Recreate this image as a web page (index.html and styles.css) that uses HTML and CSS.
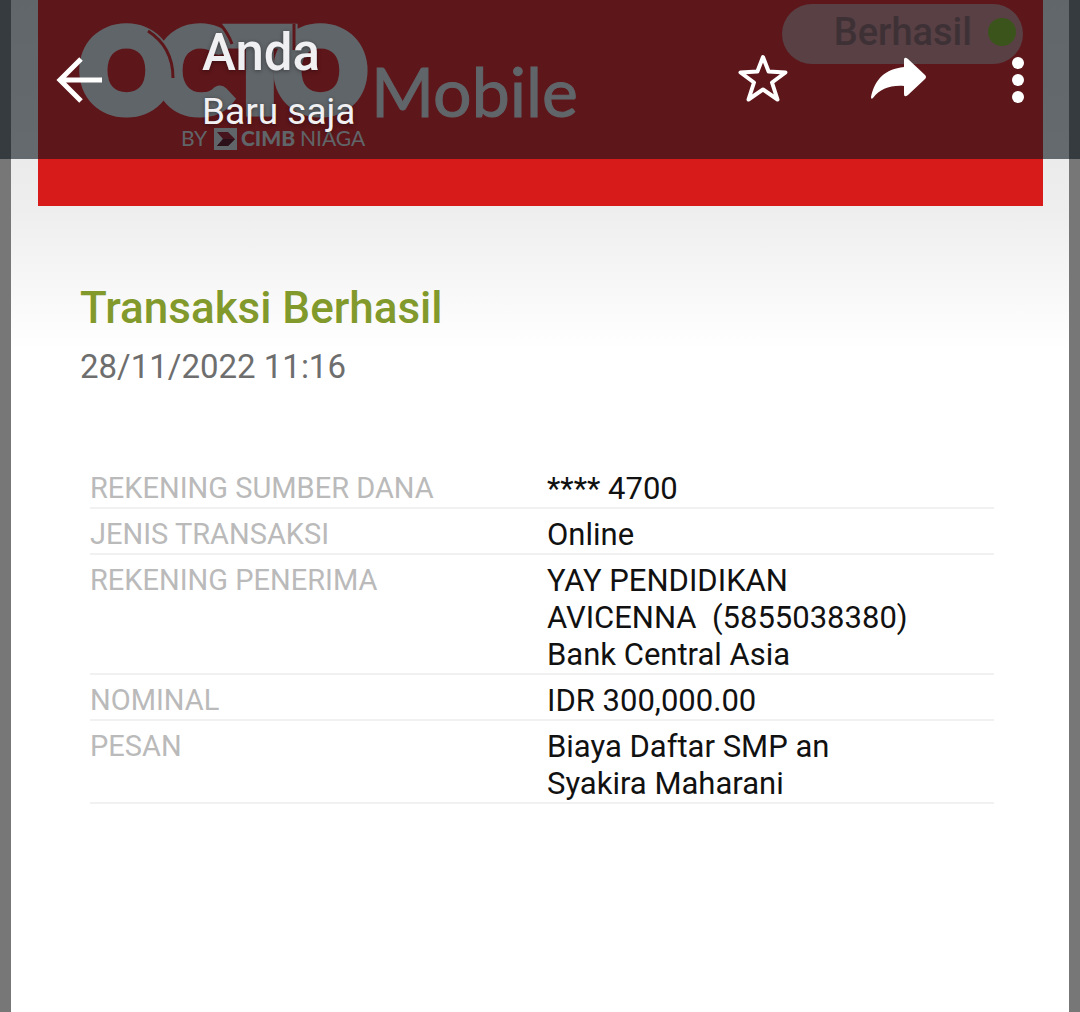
FILE: index.html
```html
<!DOCTYPE html>
<html lang="id">
<head>
<meta charset="utf-8">
<meta name="viewport" content="width=device-width, initial-scale=1">
<title>Anda</title>
<link rel="stylesheet" href="styles.css">
</head>
<body>
<header class="toolbar">
  <button class="icon-button back" type="button" aria-label="Kembali">
    <svg width="48" height="48" viewBox="1 0 48 48"><path d="M47 24H5M26 3 5 24l21 21" fill="none" stroke="#fff" stroke-width="5"/></svg>
  </button>
  <div class="heading">
    <h1 class="sender">Anda</h1>
    <p class="time">Baru saja</p>
  </div>
  <div class="actions">
    <button class="icon-button" type="button" aria-label="Beri bintang">
      <svg width="54" height="58" viewBox="0 0 54 58"><path d="M27 6 32.600 20.500 49.500 21.500 36 31.500 41.500 48.500 27 38.500 12.500 48.500 18 31.500 4.500 21.500 21.400 20.500Z" fill="none" stroke="#fff" stroke-width="4" stroke-linejoin="round"/></svg>
    </button>
    <button class="icon-button" type="button" aria-label="Teruskan">
      <svg width="56" height="46" viewBox="0 0 56 46"><path d="M34 3q0-4 4-1l17 16q2 2 0 4L38 38q-4 3-4-1v-8C20 28 10 32 3 41q-2 2-2-1C5 22 15 12 34 10Z" fill="#fff"/></svg>
    </button>
    <button class="icon-button" type="button" aria-label="Opsi lainnya">
      <svg width="18" height="46" viewBox="0 0 18 46"><g fill="#fff"><circle cx="12" cy="6" r="6"/><circle cx="12" cy="23" r="6"/><circle cx="12" cy="40" r="6"/></g></svg>
    </button>
  </div>
</header>
<main class="receipt">
  <div class="banner">
    <svg class="logo" width="560" height="160" viewBox="0 0 560 160" role="img" aria-label="OCTO Mobile by CIMB Niaga">
      <text class="logo-octo" x="43 118 188 237" y="111">OCTO</text>
      <g fill="none" stroke="#d71a1a" stroke-width="3"><path d="M110 31Q135 47 135 78"/><path d="M182 24Q190 33 194 44"/><path d="M256 24V50"/></g>
      <text class="logo-mobile" x="333" y="117">Mobile</text>
      <text class="logo-by" x="143" y="146">BY</text>
      <rect x="176" y="128" width="23" height="22" fill="#dedede"/>
      <path d="M179 132h11l7 7-7 7h-11l6-7Z" fill="#9c1420"/>
      <path d="M185 139h12l-7 7h-11Z" fill="#5c0c18"/>
      <text class="logo-cimb" x="203" y="146">CIMB</text>
      <text class="logo-by" x="262" y="146">NIAGA</text>
    </svg>
    <div class="status"><span>Berhasil</span><span class="dot"></span></div>
  </div>
  <section class="summary">
    <h2 class="result">Transaksi Berhasil</h2>
    <p class="date">28/11/2022 11:16</p>
  </section>
  <table class="details">
    <tbody>
      <tr><th scope="row">REKENING SUMBER DANA</th><td>**** 4700</td></tr>
      <tr><th scope="row">JENIS TRANSAKSI</th><td>Online</td></tr>
      <tr><th scope="row">REKENING PENERIMA</th><td>YAY PENDIDIKAN<br>AVICENNA&nbsp; (5855038380)<br>Bank Central Asia</td></tr>
      <tr><th scope="row">NOMINAL</th><td>IDR 300,000.00</td></tr>
      <tr><th scope="row">PESAN</th><td>Biaya Daftar SMP an<br>Syakira Maharani</td></tr>
    </tbody>
  </table>
</main>
</body>
</html>
```
FILE: styles.css
```css
* { box-sizing: border-box; }
body {
  margin: 0;
  min-height: 100vh;
  display: flex;
  background: #777;
  font-family: Roboto, "Liberation Sans", sans-serif;
}
h1, h2, p { margin: 0; }

/* Translucent bar that floats over the opened photo */
.toolbar {
  position: absolute;
  inset: 0 0 auto;
  z-index: 1;
  height: 159px;
  padding: 0 56px;
  display: flex;
  align-items: center;
  background: rgba(11, 20, 26, 0.6);
  color: #f0f0f2;
}
.icon-button {
  padding: 0;
  border: 0;
  background: none;
  display: flex;
  cursor: pointer;
}
.back { width: 146px; }
.heading {
  padding-top: 4px;
  text-shadow: 0 1px 4px rgba(0, 0, 0, 0.4);
}
.sender { font-size: 51px; font-weight: 500; line-height: 60px; }
.time { font-size: 37px; line-height: 58px; }
.actions {
  margin-left: auto;
  display: flex;
  align-items: center;
  gap: 80px;
}

.receipt {
  flex: 1;
  margin: 0 11px;
  background: linear-gradient(#e2e2e2, #eee 210px, #fff 350px);
}
.banner {
  margin: 0 26px 0 27px;
  height: 206px;
  display: flex;
  justify-content: space-between;
  align-items: flex-start;
  background: #d71a1a;
}
.logo { fill: #dedede; }
.logo-octo {
  font: 900 112px Lato, sans-serif;
  stroke: #dedede;
  stroke-width: 11px;
}
.logo-mobile {
  font: 400 68px Lato, sans-serif;
  stroke: #dedede;
  stroke-width: 1px;
}
.logo-by { font: 400 21px Lato, sans-serif; }
.logo-cimb { font: 900 21px Lato, sans-serif; }
.status {
  margin: 4px 20px 0 0;
  width: 241px;
  height: 60px;
  padding: 0 7px 4px 0;
  display: flex;
  align-items: center;
  justify-content: flex-end;
  gap: 16px;
  border-radius: 30px;
  background: #cb8283;
  color: #8a5c60;
  font-size: 38px;
  font-weight: 500;
}
.dot {
  width: 28px;
  height: 28px;
  border-radius: 50%;
  background: #80b41e;
}

.summary { padding: 72px 69px 0; }
.result {
  color: #82992c;
  font-size: 44px;
  font-weight: 500;
  line-height: 60px;
}
.date {
  color: #6e6e6e;
  font-size: 33px;
  line-height: 58px;
}

.details {
  width: calc(100% - 154px);
  margin: 67px 75px 0 79px;
  border-collapse: collapse;
  table-layout: fixed;
}
.details tr { border-bottom: 2px solid #f1f1f1; }
.details th, .details td {
  padding: 7px 0 0;
  font-size: 31px;
  line-height: 37px;
  text-align: left;
  vertical-align: top;
}
.details th {
  width: 457px;
  color: #bababa;
  font-size: 29px;
  font-weight: 400;
}
.details td { color: #111; }
```
